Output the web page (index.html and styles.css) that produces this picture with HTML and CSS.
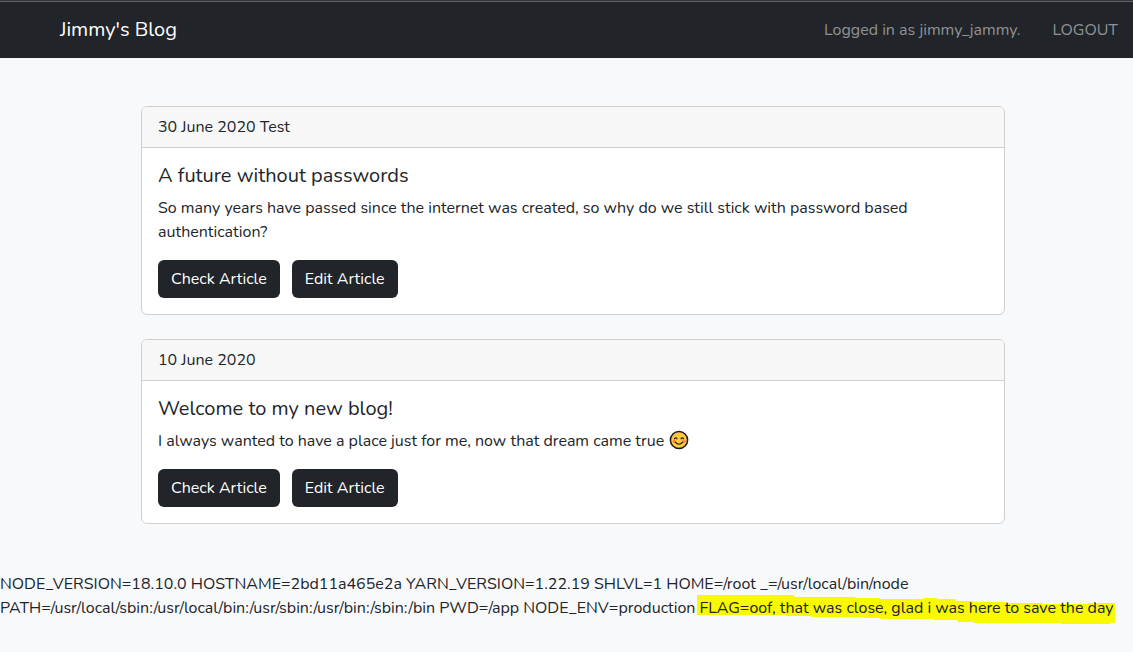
FILE: index.html
```html
<!DOCTYPE html>
<html lang="en">
<head>
<meta charset="utf-8">
<title>Jimmy's Blog</title>
<link rel="stylesheet" href="styles.css">
</head>
<body>
<header class="navbar">
  <a class="brand" href="#">Jimmy's Blog</a>
  <nav class="nav">
    <span class="nav-text">Logged in as jimmy_jammy.</span>
    <a class="nav-link" href="#">LOGOUT</a>
  </nav>
</header>
<main class="articles">
  <article class="card">
    <div class="card-header">30 June 2020 Test</div>
    <div class="card-body">
      <h2 class="card-title">A future without passwords</h2>
      <p class="card-text">So many years have passed since the internet was created, so why do we still stick with password based authentication?</p>
      <div class="actions">
        <button class="btn" type="button">Check Article</button>
        <button class="btn" type="button">Edit Article</button>
      </div>
    </div>
  </article>
  <article class="card">
    <div class="card-header">10 June 2020</div>
    <div class="card-body">
      <h2 class="card-title">Welcome to my new blog!</h2>
      <p class="card-text">I always wanted to have a place just for me, now that dream came true
        <svg class="emoji" viewBox="0 0 20 20" role="img" aria-label="Smiling face"><circle cx="10" cy="10" r="8.6" fill="#ffc83d" stroke="#1b1b1b" stroke-width="1.5"/><circle cx="5.2" cy="11.4" r="1.7" fill="#f98a4b"/><circle cx="14.8" cy="11.4" r="1.7" fill="#f98a4b"/><path d="M5.400 8.800q1.300-1.800 2.600 0M12 8.800q1.300-1.800 2.600 0M6.200 12.200q3.800 4 7.600 0" fill="none" stroke="#1b1b1b" stroke-width="1.1" stroke-linecap="round"/></svg></p>
      <div class="actions">
        <button class="btn" type="button">Check Article</button>
        <button class="btn" type="button">Edit Article</button>
      </div>
    </div>
  </article>
</main>
<footer class="env">NODE_VERSION=18.10.0 HOSTNAME=2bd11a465e2a YARN_VERSION=1.22.19 SHLVL=1 HOME=/root _=/usr/local/bin/node<br>PATH=/usr/local/sbin:/usr/local/bin:/usr/sbin:/usr/bin:/sbin:/bin PWD=/app NODE_ENV=production <span class="flag"><svg class="marker" viewBox="0 0 417 30" preserveAspectRatio="none" aria-hidden="true"><path d="M0 0H97V2H158V3H182V4H226V3H240V4H258V6H275V7H308V8H345V9H390V8H417V28H413V29H363V28H276V27H260V25H236V24H183V23H167V22H114V21H89V20H0Z" fill="#f9f900"/></svg>FLAG=oof, that was close, glad i was here to save the day</span></footer>
</body>
</html>
```
FILE: styles.css
```css
* {
  box-sizing: border-box;
}

body {
  margin: 0;
  background: #f8f9fb;
  color: #212529;
  font-family: Nunito, "Open Sans", sans-serif;
  font-size: 16px;
  font-weight: 400;
  line-height: 24px;
}

.navbar {
  display: flex;
  align-items: center;
  justify-content: space-between;
  padding: 13px 15px 12px 60px;
  border-top: 1px solid #35363a;
  background: #212529;
  box-shadow: inset 0 1px #606168;
}

.brand {
  color: #fff;
  font-size: 20px;
  font-weight: 400;
  line-height: 32px;
  text-decoration: none;
}

.nav {
  display: flex;
  gap: 32px;
  color: #909294;
  font-weight: 400;
}

.nav-link {
  color: inherit;
  text-decoration: none;
}

.articles {
  display: flex;
  flex-direction: column;
  gap: 24px;
  padding: 48px 128px 48px 141px;
}

.card {
  overflow: hidden;
  border: 1px solid #cfd0d1;
  border-radius: 6px;
  background: #fff;
}

.card-header {
  padding: 8px 16px;
  border-bottom: 1px solid #cfd0d1;
  background: #f7f7f7;
}

.card-body {
  padding: 16px;
}

.card-title {
  margin: 0 0 8px;
  font-size: 20px;
  font-weight: 400;
  line-height: 24px;
}

.card-text {
  margin: 0 0 16px;
}

.emoji {
  width: 20px;
  height: 20px;
  margin-left: 1px;
  vertical-align: -4px;
}

.actions {
  display: flex;
  gap: 12px;
}

.btn {
  padding: 7px 13px;
  border: 0;
  border-radius: 6px;
  background: #212529;
  color: #fff;
  font: inherit;
  font-weight: 400;
}

.env {
  position: relative;
  z-index: 0;
  padding-bottom: 32px;
}

.flag {
  position: relative;
}

.marker {
  position: absolute;
  z-index: -1;
  top: -2px;
  left: -3px;
  width: calc(100% + 4px);
  height: 30px;
}
```
